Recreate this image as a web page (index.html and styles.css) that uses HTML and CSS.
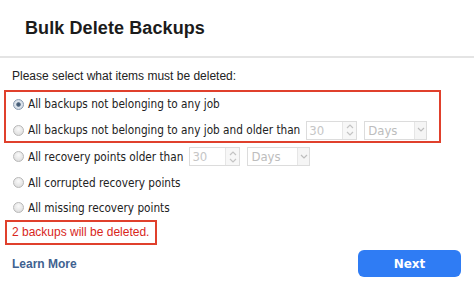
FILE: index.html
```html
<!DOCTYPE html>
<html>
<head>
<meta charset="utf-8">
<link rel="stylesheet" href="styles.css">
</head>
<body>
<div class="dialog">
  <div class="header"><h1 class="title">Bulk Delete Backups</h1></div>
  <div class="divider"></div>
  <div class="content">
    <p class="prompt">Please select what items must be deleted:</p>
    <div class="highlight group">
      <div class="option">
        <span class="radio checked"></span>
        <span class="label">All backups not belonging to any job</span>
      </div>
      <div class="option">
        <span class="radio"></span>
        <span class="label">All backups not belonging to any job and older than</span>
        <span class="spin"><span class="num">30</span><span class="arrows"><svg width="10" height="14" viewBox="0 0 10 14"><path d="M2 5 L5 2 L8 5" fill="none" stroke="#c4c4c4" stroke-width="1.2"/><path d="M2 9 L5 12 L8 9" fill="none" stroke="#c4c4c4" stroke-width="1.2"/></svg></span></span>
        <span class="select"><span class="sel-text">Days</span><span class="sel-arrow"><svg width="8" height="6" viewBox="0 0 8 6"><path d="M1 1 L4 4 L7 1" fill="none" stroke="#bdbdbd" stroke-width="1.2"/></svg></span></span>
      </div>
    </div>
    <div class="plain">
      <div class="option tall">
        <span class="radio"></span>
        <span class="label">All recovery points older than</span>
        <span class="spin"><span class="num">30</span><span class="arrows"><svg width="10" height="14" viewBox="0 0 10 14"><path d="M2 5 L5 2 L8 5" fill="none" stroke="#c4c4c4" stroke-width="1.2"/><path d="M2 9 L5 12 L8 9" fill="none" stroke="#c4c4c4" stroke-width="1.2"/></svg></span></span>
        <span class="select"><span class="sel-text">Days</span><span class="sel-arrow"><svg width="8" height="6" viewBox="0 0 8 6"><path d="M1 1 L4 4 L7 1" fill="none" stroke="#bdbdbd" stroke-width="1.2"/></svg></span></span>
      </div>
      <div class="option">
        <span class="radio"></span>
        <span class="label">All corrupted recovery points</span>
      </div>
      <div class="option">
        <span class="radio"></span>
        <span class="label">All missing recovery points</span>
      </div>
    </div>
    <div class="highlight notice">2 backups will be deleted.</div>
  </div>
  <div class="footer">
    <a class="learn">Learn More</a>
    <button class="next">Next</button>
  </div>
</div>
</body>
</html>
```
FILE: styles.css
```css
* { box-sizing: border-box; }
html, body { margin: 0; padding: 0; background: #fff; }
body { width: 474px; height: 284px; overflow: hidden; font-family: "Liberation Sans", Arial, sans-serif; color: #222; }
.dialog { display: flex; flex-direction: column; height: 284px; }
.header { height: 56px; padding-left: 25px; display: flex; align-items: center; }
.title { margin: 0; font-size: 18px; font-weight: bold; color: #1b1b1b; letter-spacing: 0.1px; }
.divider { height: 2px; background: #e4e4e4; }
.content { padding: 0 0 0 4px; }
.prompt { margin: 10px 0 0 8px; font-size: 12px; line-height: 16px; color: #222; }
.highlight { border: 2px solid #e0402c; }
.group { margin-top: 6px; width: 437px; height: 53px; padding: 2px 0 1px 7px; display: flex; flex-direction: column; justify-content: space-between; }
.option { display: flex; align-items: center; height: 20px; font-family: "DejaVu Sans Condensed", "DejaVu Sans", sans-serif; font-size: 11.7px; color: #222; }
.plain { padding-left: 9px; }
.plain .option { height: 25px; }
.plain .option.tall { height: 27px; }
.radio { width: 11px; height: 11px; border-radius: 50%; border: 1px solid #b8b8b8; background: radial-gradient(circle at 50% 35%, #fafafa 0%, #e2e2e2 70%, #cfcfcf 100%); margin-right: 4px; flex: none; }
.radio.checked { border-color: #8a9bb0; background: radial-gradient(circle at 50% 50%, #3f5670 0%, #4f6680 28%, #dfe6ee 42%, #c7d2de 100%); }
.label { white-space: nowrap; }
.spin { margin-left: 6px; width: 51px; height: 19px; border: 1px solid #dcdcdc; display: flex; background: #fff; flex: none; }
.num { flex: 1; color: #c6c6c6; font-size: 13px; padding-left: 2px; line-height: 17px; }
.arrows { width: 14px; border-left: 1px solid #e6e6e6; display: flex; align-items: center; justify-content: center; background: #f7f7f7; }
.select { margin-left: 7px; width: 63px; height: 19px; border: 1px solid #dcdcdc; display: flex; background: #fff; flex: none; }
.sel-text { flex: 1; color: #bdbdbd; font-size: 13px; padding-left: 3px; line-height: 17px; }
.sel-arrow { width: 12px; display: flex; align-items: center; justify-content: center; background: #f5f5f5; border-left: 1px solid #e6e6e6; }
.notice { margin-top: 0; margin-left: 1px; width: 152px; height: 25px; color: #d8261c; font-size: 12px; line-height: 21px; padding-left: 5px; white-space: nowrap; }
.footer { display: flex; justify-content: space-between; align-items: center; padding: 5px 13px 0 12px; }
.learn { font-weight: bold; font-size: 12px; color: #3f6290; }
.next { width: 103px; height: 27px; border: none; border-radius: 6px; background: #2f7cf4; color: #fff; font-family: "DejaVu Sans", sans-serif; font-weight: bold; font-size: 12px; }
```
